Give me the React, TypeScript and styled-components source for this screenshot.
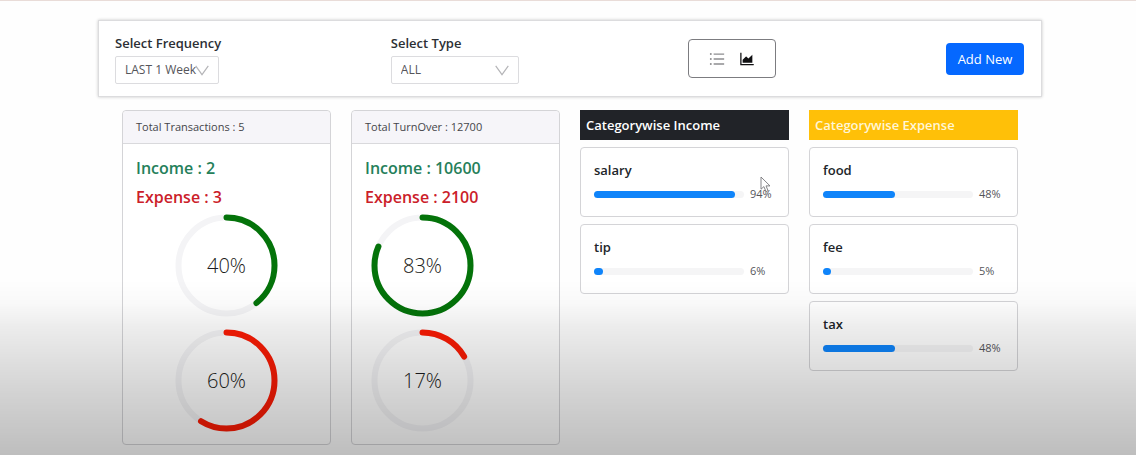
import React from "react";
import styled, { createGlobalStyle } from "styled-components";
import { AiOutlineAreaChart, AiOutlineUnorderedList } from "react-icons/ai";

const GlobalStyle = createGlobalStyle`
  *, *::before, *::after { box-sizing: border-box; }
  body {
    margin: 0;
    background: #fefefe;
    color: #212529;
    font-family: "Open Sans", "Noto Sans", sans-serif;
    font-size: 12px;
    line-height: 18px;
  }
  button, select { font: inherit; color: inherit; }
  h2, h3, p { margin: 0; }
`;

const Page = styled.div`
  min-height: 100vh;
  padding: 0 94px 10px 98px;
  border-top: 1px solid #e9dcd8;
`;

const Filters = styled.header`
  display: flex;
  justify-content: space-between;
  align-items: center;
  margin-top: 19px;
  padding: 12px 17px 12px 16px;
  border: 1px solid #dcdcde;
  box-shadow: 0 0 3px rgba(0, 0, 0, 0.22);
  background: #fff;
`;

const Field = styled.div`
  display: flex;
  flex-direction: column;
  gap: 3px;
`;

const FieldLabel = styled.label`
  color: #2c2f34;
  font-size: 13px;
  font-weight: 600;
  line-height: 20px;
`;

const SelectBox = styled.div<{ $width: number }>`
  position: relative;
  width: ${(p) => p.$width}px;
  height: 28px;
`;

const Select = styled.select`
  appearance: none;
  width: 100%;
  height: 100%;
  padding: 0 0 0 9px;
  border: 1px solid #dcdcdf;
  border-radius: 2px;
  background: #fff;
  color: #55555a;
  font-size: 12px;
`;

const Chevron = styled.svg`
  position: absolute;
  right: 10px;
  top: 9px;
  pointer-events: none;
`;

const ViewSwitch = styled.div`
  display: flex;
  align-items: center;
  justify-content: center;
  gap: 12px;
  width: 88px;
  height: 39px;
  border: 1px solid #7c7c80;
  border-radius: 4px;
`;

const IconButton = styled.button<{ $active?: boolean }>`
  display: flex;
  padding: 0;
  border: 0;
  background: none;
  color: ${(p) => (p.$active ? "#101012" : "#8d8d90")};
  cursor: pointer;
`;

const AddButton = styled.button`
  width: 78px;
  height: 32px;
  padding: 0;
  border: 0;
  border-radius: 4px;
  background: #0568ff;
  color: #fff;
  font-size: 13px;
  cursor: pointer;
`;

const Columns = styled.main`
  display: grid;
  grid-template-columns: repeat(4, minmax(0, 1fr));
  gap: 20px;
  align-items: start;
  margin-top: 13px;
  padding: 0 24px;
`;

const Card = styled.section`
  border: 1px solid #d4d4d7;
  border-radius: 4px;
  background: #fff;
`;

const CardHeader = styled.h2`
  padding: 7px 13px;
  border-bottom: 1px solid #d9d9dc;
  border-radius: 4px 4px 0 0;
  background: #f6f5f9;
  color: #45454a;
  font-size: 11px;
  font-weight: 400;
  line-height: 18px;
`;

const CardBody = styled.div`
  padding: 10px 13px 12px;
`;

const Total = styled.h3<{ $color: string }>`
  color: ${(p) => p.$color};
  font-size: 16px;
  font-weight: 600;
  line-height: 29px;
`;

const Rings = styled.div<{ $centered?: boolean }>`
  display: flex;
  flex-direction: column;
  gap: 12px;
  align-items: ${(p) => (p.$centered ? "center" : "flex-start")};
  padding: ${(p) => (p.$centered ? "2px 0 0" : "2px 0 0 6px")};
`;

const RingBox = styled.div`
  display: grid;
  place-items: center;
  > * { grid-area: 1 / 1; }
`;

const RingText = styled.span`
  color: #1c1c20;
  font-size: 20px;
  font-weight: 300;
  line-height: 24px;
`;

const CategoryList = styled.section`
  display: flex;
  flex-direction: column;
  gap: 7px;
`;

const CategoryTitle = styled.h2<{ $bg: string; $color: string }>`
  padding: 6px;
  background: ${(p) => p.$bg};
  color: ${(p) => p.$color};
  font-size: 13px;
  font-weight: 600;
  line-height: 18px;
`;

const CategoryCard = styled(Card)`
  position: relative;
  padding: 12px 14px 13px 13px;
`;

const CategoryName = styled.h3`
  font-size: 13px;
  font-weight: 600;
  line-height: 20px;
`;

const BarRow = styled.div`
  display: flex;
  align-items: center;
  gap: 6px;
  margin-top: 5px;
  height: 18px;
`;

const Track = styled.div`
  flex: 1;
  height: 7px;
  border-radius: 4px;
  background: #f5f5f6;
`;

const Fill = styled.div`
  height: 100%;
  min-width: 7px;
  border-radius: 4px;
  background: #0f84fa;
`;

const BarText = styled.span`
  width: 24px;
  color: #55555a;
  font-size: 11px;
  white-space: nowrap;
`;

const Pointer = styled.svg`
  position: absolute;
  right: 17px;
  top: 28px;
  pointer-events: none;
`;

const Shade = styled.div`
  position: fixed;
  inset: auto 0 0 0;
  height: 175px;
  pointer-events: none;
  background: linear-gradient(
    to bottom,
    rgba(0, 0, 0, 0) 0%,
    rgba(0, 0, 0, 0.02) 13%,
    rgba(0, 0, 0, 0.07) 27%,
    rgba(0, 0, 0, 0.12) 46%,
    rgba(0, 0, 0, 0.17) 64%,
    rgba(0, 0, 0, 0.25) 100%
  );
`;

function Picker({ id, label, width, options }: { id: string; label: string; width: number; options: string[] }) {
  return (
    <Field>
      <FieldLabel htmlFor={id}>{label}</FieldLabel>
      <SelectBox $width={width}>
        <Select id={id}>
          {options.map((o) => (
            <option key={o}>{o}</option>
          ))}
        </Select>
        <Chevron width="14" height="11" viewBox="0 0 14 11" fill="none" stroke="#b5b5b8" strokeWidth="1.2" aria-hidden="true">
          <path d="M0.7 0.8 L7 9.6 L13.3 0.8" />
        </Chevron>
      </SelectBox>
    </Field>
  );
}

function Ring({ percent, color }: { percent: number; color: string }) {
  const r = 48;
  const length = 2 * Math.PI * r;
  return (
    <RingBox>
      <svg width="103" height="103" viewBox="0 0 103 103" fill="none" strokeWidth="6" aria-hidden="true">
        <circle cx="51.5" cy="51.5" r={r} stroke="#f4f4f6" />
        <circle
          cx="51.5"
          cy="51.5"
          r={r}
          stroke={color}
          strokeLinecap="round"
          strokeDasharray={`${(length - 6) * (percent / 100)} ${length}`}
          transform="rotate(-90 51.5 51.5)"
        />
      </svg>
      <RingText>{percent}%</RingText>
    </RingBox>
  );
}

type SummaryProps = {
  title: string;
  income: number;
  expense: number;
  incomePercent: number;
  expensePercent: number;
  centered?: boolean;
};

function Summary({ title, income, expense, incomePercent, expensePercent, centered }: SummaryProps) {
  return (
    <Card>
      <CardHeader>{title}</CardHeader>
      <CardBody>
        <Total $color="#25805a">Income : {income}</Total>
        <Total $color="#cb2029">Expense : {expense}</Total>
        <Rings $centered={centered}>
          <Ring percent={incomePercent} color="#04730a" />
          <Ring percent={expensePercent} color="#fb1c05" />
        </Rings>
      </CardBody>
    </Card>
  );
}

function Category({ name, percent, children }: { name: string; percent: number; children?: React.ReactNode }) {
  return (
    <CategoryCard>
      <CategoryName>{name}</CategoryName>
      <BarRow>
        <Track>
          <Fill style={{ width: `${percent}%` }} />
        </Track>
        <BarText>{percent}%</BarText>
      </BarRow>
      {children}
    </CategoryCard>
  );
}

export default function App() {
  return (
    <>
      <GlobalStyle />
      <Page>
        <Filters>
          <Picker id="frequency" label="Select Frequency" width={104} options={["LAST 1 Week", "LAST 1 Month", "LAST 1 Year"]} />
          <Picker id="type" label="Select Type" width={128} options={["ALL", "INCOME", "EXPENSE"]} />
          <ViewSwitch>
            <IconButton type="button" aria-label="List view">
              <AiOutlineUnorderedList size={18} />
            </IconButton>
            <IconButton type="button" aria-label="Chart view" $active>
              <AiOutlineAreaChart size={18} />
            </IconButton>
          </ViewSwitch>
          <AddButton type="button">Add New</AddButton>
        </Filters>
        <Columns>
          <Summary title="Total Transactions : 5" income={2} expense={3} incomePercent={40} expensePercent={60} centered />
          <Summary title="Total TurnOver : 12700" income={10600} expense={2100} incomePercent={83} expensePercent={17} />
          <CategoryList>
            <CategoryTitle $bg="#212328" $color="#ffffff">Categorywise Income</CategoryTitle>
            <Category name="salary" percent={94}>
              <Pointer width="11" height="17" viewBox="0 0 11 17" fill="#fff" stroke="#77777b" strokeWidth="0.9" aria-hidden="true">
                <path d="M1 1 V13.2 L3.9 10.6 L6 15.6 L8.1 14.7 L6 9.9 H10 Z" />
              </Pointer>
            </Category>
            <Category name="tip" percent={6} />
          </CategoryList>
          <CategoryList>
            <CategoryTitle $bg="#ffc008" $color="#fff6d6">Categorywise Expense</CategoryTitle>
            <Category name="food" percent={48} />
            <Category name="fee" percent={5} />
            <Category name="tax" percent={48} />
          </CategoryList>
        </Columns>
      </Page>
      <Shade />
    </>
  );
}
